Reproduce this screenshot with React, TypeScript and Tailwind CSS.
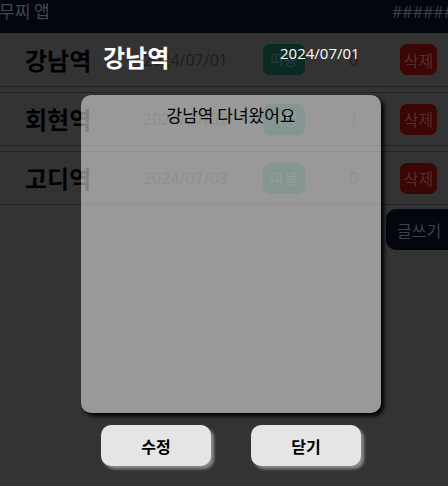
import React from "react";

const rows = [
  { title: "강남역", date: "2024/07/01", likes: 0 },
  { title: "회현역", date: "2024/07/02", likes: 1 },
  { title: "고디역", date: "2024/07/03", likes: 0 },
];

const kr = { fontFamily: '"Noto Sans CJK KR", "Noto Sans", sans-serif' };
const num = { fontFamily: '"Open Sans", "Noto Sans CJK KR", sans-serif' };

export default function App() {
  return (
    <div className="relative w-[448px] h-[486px] overflow-hidden bg-[#333333]" style={kr}>
      <div className="h-[33px] bg-[#03060c] flex justify-between items-start">
        <div className="text-[17px] leading-[22px] text-[#42474e] -ml-[1px]">무찌 앱</div>
        <div className="text-[16px] leading-[24px] text-[#3d4249] mr-[-6px]" style={num}>######</div>
      </div>

      <div className="flex flex-col">
        {rows.map((r, i) => (
          <div
            key={r.title}
            className={`flex items-center h-[54px] border-b border-[#222222] ${i > 0 ? "border-t mt-[5px]" : ""}`}
          >
            <div className="w-[143px] pl-[25px] text-[24px] font-bold text-black leading-none">{r.title}</div>
            <div className="w-[120px] text-[16px] text-[#1c1c1c]" style={num}>{r.date}</div>
            <div className="w-[42px] h-[31px] rounded-[7px] bg-[#0a2a24] flex items-center justify-center text-[15px] text-[#253f3a]">
              따봉
            </div>
            <div className="w-[95px] pl-[44px] text-[16px] text-[#1c1c1c]" style={num}>{r.likes}</div>
            <div className="w-[37px] h-[31px] rounded-[7px] bg-[#3a0606] flex items-center justify-center text-[16px] text-[#5c2c2c]">
              삭제
            </div>
          </div>
        ))}
      </div>

      <div className="flex justify-end mt-[4px]">
        <div className="w-[62px] h-[41px] rounded-l-[10px] bg-[#03060c] flex items-center pl-[11px] text-[16px] text-[#3d4249]">
          글쓰기
        </div>
      </div>

      {/* modal overlay content */}
      <div className="absolute left-[103px] top-[41px] text-[24px] font-bold text-white leading-[32px]">강남역</div>
      <div className="absolute left-[280px] top-[42px] text-[15px] text-white leading-[22px]" style={num}>2024/07/01</div>

      <div className="absolute left-[81px] top-[95px] w-[300px] h-[318px] rounded-[10px] bg-white/50 shadow-[3px_3px_4px_rgba(0,0,0,1)] flex justify-center">
        <div className="mt-[8px] text-[17px] leading-[24px] text-black">강남역 다녀왔어요</div>
      </div>

      <div className="absolute left-[101px] top-[425px] w-[110px] h-[41px] rounded-[10px] bg-[#e5e5e5] shadow-[3px_3px_3px_rgba(140,140,140,1)] flex items-center justify-center text-[16px] font-semibold text-black">
        수정
      </div>
      <div className="absolute left-[251px] top-[425px] w-[110px] h-[41px] rounded-[10px] bg-[#e5e5e5] shadow-[3px_3px_3px_rgba(140,140,140,1)] flex items-center justify-center text-[16px] font-semibold text-black">
        닫기
      </div>
    </div>
  );
}
